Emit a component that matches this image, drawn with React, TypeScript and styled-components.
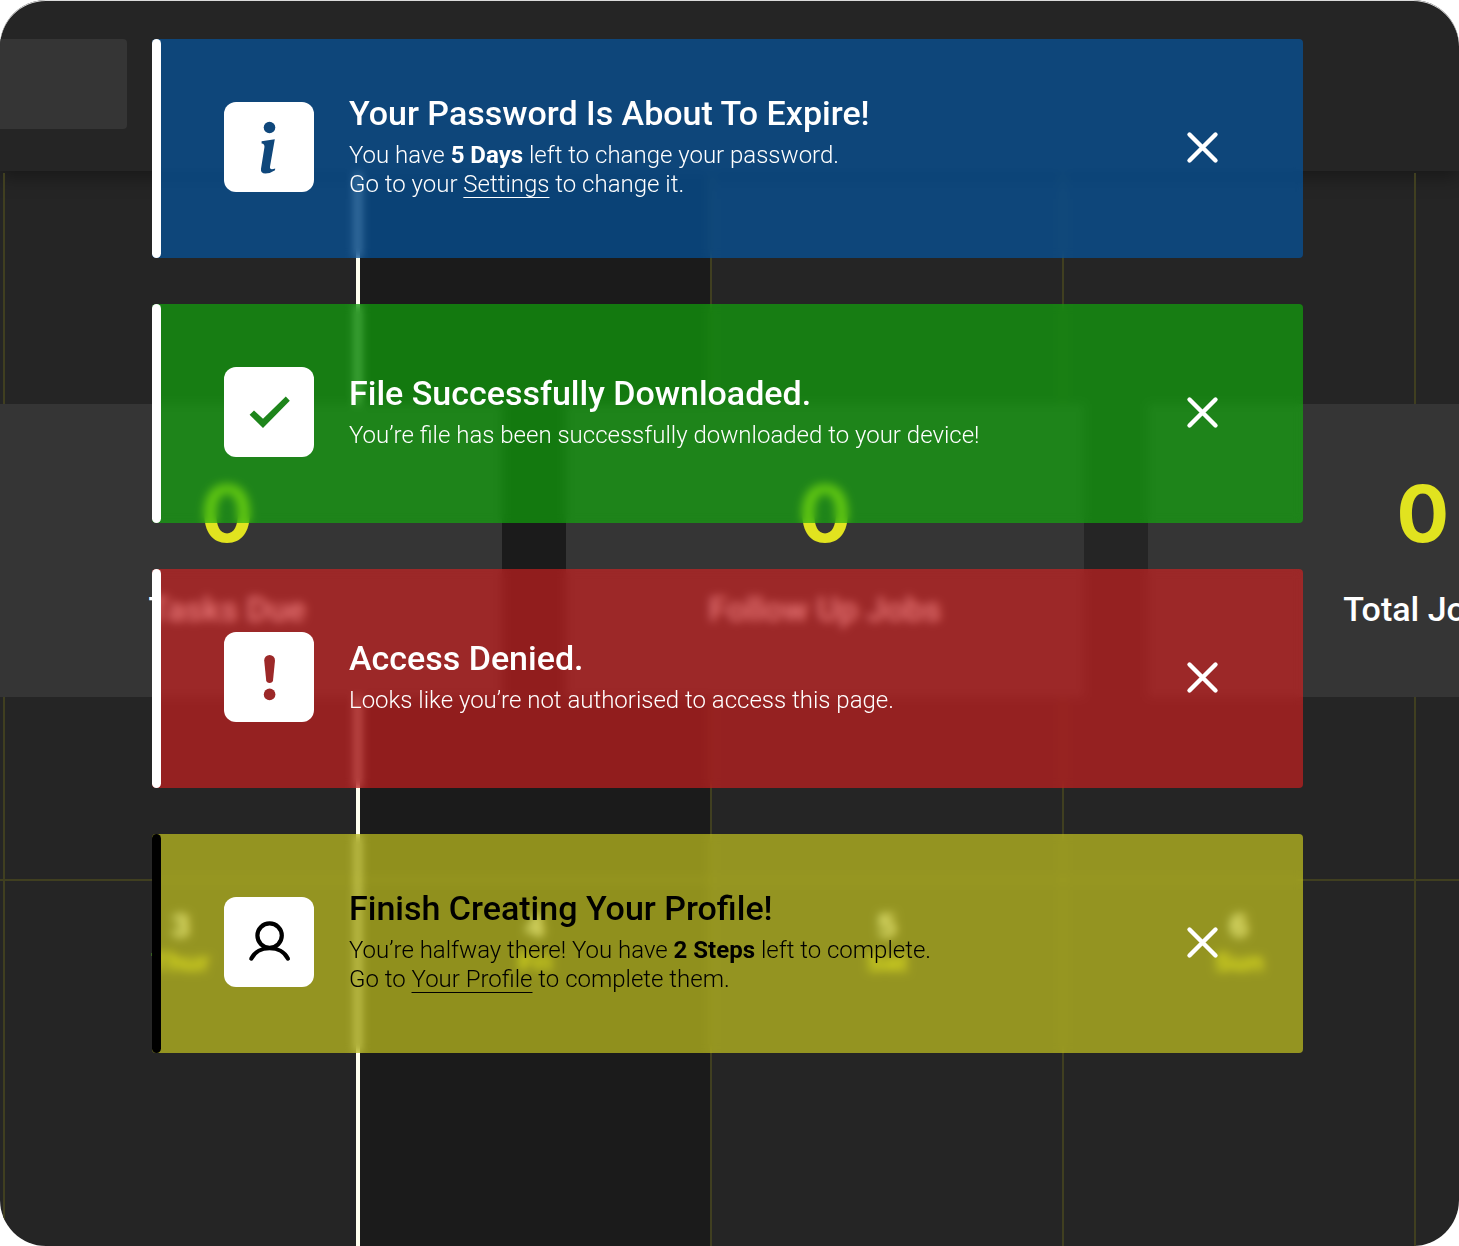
import React, { useState } from 'react';
import styled, { createGlobalStyle } from 'styled-components';

const GlobalStyle = createGlobalStyle`
  *, *::before, *::after { box-sizing: border-box; }
  body { margin: 0; background: #fff; }
  h2, p { margin: 0; }
`;

const Stage = styled.main`
  display: grid;
  grid-template: minmax(100vh, auto) / minmax(0, 1fr);
  overflow: hidden;
  border-radius: 46px;
  background: #252525;
  box-shadow: inset 0 1px #dcdcdc;
  color: #fff;
  font-family: Roboto, "Liberation Sans", sans-serif;
`;

const Layer = styled.div`
  grid-area: 1 / 1;
  min-width: 0;
`;

const Planner = styled(Layer)`
  display: flex;
  flex-direction: column;
`;

const TopBar = styled.header`
  height: 171px;
  padding-top: 39px;
  box-shadow: 0 6px 18px rgba(0, 0, 0, 0.36);
`;

const TopBarField = styled.div`
  width: 127px;
  height: 90px;
  border-radius: 0 4px 4px 0;
  background: #353535;
`;

const Calendar = styled.section`
  flex: 1;
  display: grid;
  grid-template: 706px 1fr / 353fr 354fr 352fr 352fr 353fr;
  width: calc(100% + 308px);
  margin-top: 2px;
  padding-left: 3px;
  background: linear-gradient(#403f20, #403f20) 0 706px / 100% 2px no-repeat;
`;

const Day = styled.div<{ $today?: boolean; $ruled?: boolean }>`
  padding-top: 28px;
  border-left: ${p => (p.$today ? '4px solid #fffff0' : '2px solid #403f20')};
  background: ${p => (p.$today ? '#1b1b1b' : 'transparent')};
  background-clip: padding-box;
  box-shadow: ${p => (p.$ruled && p.$today ? 'inset 0 2px #403f20' : 'none')};
  text-align: center;
`;

const DayNumber = styled.div`
  font: 700 34px/36px "Liberation Sans", sans-serif;
`;

const DayName = styled.div`
  color: #e1e31f;
  font: 700 26px/38px "Liberation Sans", sans-serif;
`;

const Stats = styled(Layer)`
  display: grid;
  grid-template-columns: 550fr 517fr 550fr;
  gap: 64px;
  align-content: start;
  width: calc(100% + 287px);
  margin-left: -48px;
  padding-top: 404px;
`;

const StatCard = styled.section`
  height: 293px;
  padding-top: 62px;
  background: #353535;
  text-align: center;
`;

const StatValue = styled.div`
  color: #e1e31f;
  font: 700 78px/96px Inter, "Liberation Sans", sans-serif;
`;

const StatLabel = styled.div`
  margin-top: 27px;
  font-size: 34px;
  font-weight: 500;
  line-height: 40px;
`;

const ToastStack = styled(Layer)`
  display: flex;
  flex-direction: column;
  gap: 46px;
  padding: 39px 156px 46px 152px;
`;

const ToastBox = styled.section<{ $tint: string; $ink: string }>`
  display: flex;
  min-height: 219px;
  padding-right: 84px;
  border-radius: 4px;
  background: ${p => p.$tint};
  backdrop-filter: blur(5px);
  color: ${p => p.$ink};
`;

const Accent = styled.span`
  flex: 0 0 9px;
  margin-right: 63px;
  border-radius: 5px;
  background: currentColor;
`;

const ToastContent = styled.div`
  flex: 1;
  display: flex;
  align-items: center;
  min-width: 0;
  padding-bottom: 3px;
`;

const Tile = styled.span<{ $color: string }>`
  flex: 0 0 90px;
  height: 90px;
  margin-right: 35px;
  border-radius: 12px;
  background: #fff;
  color: ${p => p.$color};

  svg { display: block; }
`;

const Copy = styled.div`
  flex: 1;
  min-width: 0;
  padding-bottom: 2px;
`;

const Title = styled.h2`
  margin-bottom: 8px;
  font-size: 34px;
  font-weight: 500;
  line-height: 40px;
`;

const Message = styled.p`
  font-size: 24px;
  font-weight: 300;
  line-height: 29px;

  strong { font-weight: 700; }
`;

const TextLink = styled.a`
  color: inherit;
  text-decoration: underline;
  text-decoration-thickness: 1px;
  text-decoration-skip-ink: none;
  text-underline-offset: 5px;
`;

const CloseButton = styled.button`
  flex: none;
  width: 33px;
  height: 33px;
  padding: 0;
  border: 0;
  background: none;
  color: #fff;
  cursor: pointer;

  svg { display: block; }
`;

const InfoIcon = () => (
  <svg width="90" height="90" viewBox="0 0 90 90" fill="currentColor" aria-hidden="true">
    <circle cx="45.5" cy="25.5" r="5.8" />
    <path d="M37.6 39.2 L50.8 37.2 L46 64.5 Q45.4 68.6 51.2 66.4 L51 68.2 Q46 71.6 41.4 71.6 Q36.4 71.6 37 66.8 L40.4 45.5 Q41 41.6 37.6 41.4 Z" />
  </svg>
);

const CheckIcon = () => (
  <svg width="90" height="90" viewBox="0 0 90 90" fill="currentColor" aria-hidden="true">
    <path d="M30 43.4 L39 51.8 L61.8 29.6 L65.8 33.8 L39 61 L25.6 47.8 Z" />
  </svg>
);

const AlertIcon = () => (
  <svg width="90" height="90" viewBox="0 0 90 90" fill="currentColor" aria-hidden="true">
    <path d="M40.2 28.4 A5.4 5.4 0 0 1 51 28.4 L49 48.6 Q48.6 51 45.6 51 Q42.6 51 42.2 48.6 Z" />
    <circle cx="45.6" cy="62.4" r="5.8" />
  </svg>
);

const UserIcon = () => (
  <svg width="90" height="90" viewBox="0 0 90 90" fill="none" stroke="currentColor" strokeWidth="4.2" strokeLinecap="round" aria-hidden="true">
    <circle cx="45.6" cy="38.6" r="12.2" />
    <path d="M27.3 61.6 C34 47.6 57.2 47.6 63.9 61.6" />
  </svg>
);

const CloseIcon = () => (
  <svg width="33" height="33" viewBox="0 0 33 33" fill="none" stroke="currentColor" strokeWidth="4.4" strokeLinecap="round" aria-hidden="true">
    <path d="M3.5 3.5 L29.5 29.5 M29.5 3.5 L3.5 29.5" />
  </svg>
);

type ToastData = {
  id: string;
  tint: string;
  ink: string;
  iconColor: string;
  icon: React.ReactNode;
  title: string;
  body: React.ReactNode;
};

const toasts: ToastData[] = [
  {
    id: 'info',
    tint: 'rgba(0, 93, 180, 0.6)',
    ink: '#fff',
    iconColor: '#0f477b',
    icon: <InfoIcon />,
    title: 'Your Password Is About To Expire!',
    body: (
      <>
        You have <strong>5 Days</strong> left to change your password.
        <br />
        Go to your <TextLink href="#settings">Settings</TextLink> to change it.
      </>
    ),
  },
  {
    id: 'success',
    tint: 'rgba(15, 185, 8, 0.6)',
    ink: '#fff',
    iconColor: '#1e851b',
    icon: <CheckIcon />,
    title: 'File Successfully Downloaded.',
    body: 'You’re file has been successfully downloaded to your device!',
  },
  {
    id: 'error',
    tint: 'rgba(225, 31, 32, 0.6)',
    ink: '#fff',
    iconColor: '#9c2828',
    icon: <AlertIcon />,
    title: 'Access Denied.',
    body: 'Looks like you’re not authorised to access this page.',
  },
  {
    id: 'profile',
    tint: 'rgba(224, 224, 31, 0.6)',
    ink: '#000',
    iconColor: '#000',
    icon: <UserIcon />,
    title: 'Finish Creating Your Profile!',
    body: (
      <>
        You’re halfway there! You have <strong>2 Steps</strong> left to complete.
        <br />
        Go to <TextLink href="#profile">Your Profile</TextLink> to complete them.
      </>
    ),
  },
];

const days = [
  { number: 3, name: 'Thur' },
  { number: 4, name: 'Fri' },
  { number: 5, name: 'Sat' },
  { number: 6, name: 'Sun' },
];

const stats = ['Tasks Due', 'Follow Up Jobs', 'Total Jobs'];

function Toast({ data, onClose }: { data: ToastData; onClose: () => void }) {
  return (
    <ToastBox $tint={data.tint} $ink={data.ink} role="status">
      <Accent />
      <ToastContent>
        <Tile $color={data.iconColor}>{data.icon}</Tile>
        <Copy>
          <Title>{data.title}</Title>
          <Message>{data.body}</Message>
        </Copy>
        <CloseButton type="button" aria-label="Dismiss" onClick={onClose}>
          <CloseIcon />
        </CloseButton>
      </ToastContent>
    </ToastBox>
  );
}

export default function App() {
  const [closed, setClosed] = useState<string[]>([]);
  return (
    <>
      <GlobalStyle />
      <Stage>
        <Planner>
          <TopBar>
            <TopBarField />
          </TopBar>
          <Calendar>
            {[0, 1, 2, 3, 4].map(i => (
              <Day key={i} $today={i === 1} />
            ))}
            {days.map((d, i) => (
              <Day key={d.name} $today={i === 1} $ruled>
                <DayNumber>{d.number}</DayNumber>
                <DayName>{d.name}</DayName>
              </Day>
            ))}
            <Day $ruled />
          </Calendar>
        </Planner>
        <Stats>
          {stats.map(label => (
            <StatCard key={label}>
              <StatValue>0</StatValue>
              <StatLabel>{label}</StatLabel>
            </StatCard>
          ))}
        </Stats>
        <ToastStack>
          {toasts
            .filter(t => !closed.includes(t.id))
            .map(t => (
              <Toast key={t.id} data={t} onClose={() => setClosed([...closed, t.id])} />
            ))}
        </ToastStack>
      </Stage>
    </>
  );
}
